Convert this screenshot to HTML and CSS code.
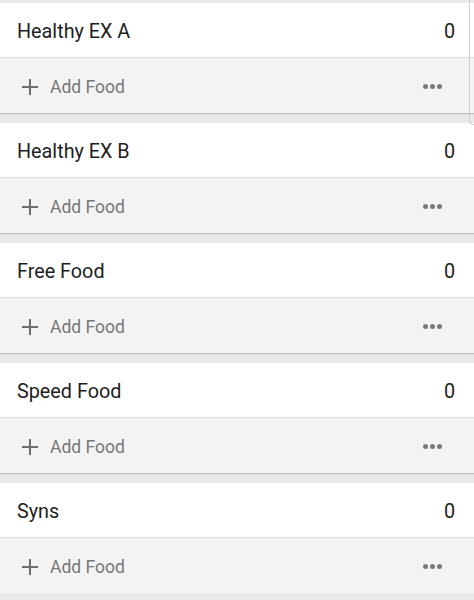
FILE: index.html
```html
<!DOCTYPE html>
<html>
<head>
<meta charset="utf-8">
<link rel="stylesheet" href="styles.css">
</head>
<body>
<div class="list">
  <section class="card">
    <div class="head"><span class="title">Healthy EX A</span><span class="count">0</span></div>
    <div class="foot">
      <span class="add"><svg class="plus" viewBox="0 0 16 16" width="16" height="16"><path d="M8 0v16M0 8h16" stroke="#6e6e6e" stroke-width="2"/></svg>Add Food</span>
      <span class="dots"><i></i><i></i><i></i></span>
    </div>
  </section>
  <section class="card">
    <div class="head"><span class="title">Healthy EX B</span><span class="count">0</span></div>
    <div class="foot">
      <span class="add"><svg class="plus" viewBox="0 0 16 16" width="16" height="16"><path d="M8 0v16M0 8h16" stroke="#6e6e6e" stroke-width="2"/></svg>Add Food</span>
      <span class="dots"><i></i><i></i><i></i></span>
    </div>
  </section>
  <section class="card">
    <div class="head"><span class="title">Free Food</span><span class="count">0</span></div>
    <div class="foot">
      <span class="add"><svg class="plus" viewBox="0 0 16 16" width="16" height="16"><path d="M8 0v16M0 8h16" stroke="#6e6e6e" stroke-width="2"/></svg>Add Food</span>
      <span class="dots"><i></i><i></i><i></i></span>
    </div>
  </section>
  <section class="card">
    <div class="head"><span class="title">Speed Food</span><span class="count">0</span></div>
    <div class="foot">
      <span class="add"><svg class="plus" viewBox="0 0 16 16" width="16" height="16"><path d="M8 0v16M0 8h16" stroke="#6e6e6e" stroke-width="2"/></svg>Add Food</span>
      <span class="dots"><i></i><i></i><i></i></span>
    </div>
  </section>
  <section class="card">
    <div class="head"><span class="title">Syns</span><span class="count">0</span></div>
    <div class="foot">
      <span class="add"><svg class="plus" viewBox="0 0 16 16" width="16" height="16"><path d="M8 0v16M0 8h16" stroke="#6e6e6e" stroke-width="2"/></svg>Add Food</span>
      <span class="dots"><i></i><i></i><i></i></span>
    </div>
  </section>
  <div class="scrolledge"></div>
</div>
</body>
</html>
```
FILE: styles.css
```css
html, body {
  margin: 0;
  padding: 0;
  background: #e9e9e9;
}
body {
  font-family: Roboto, "Noto Sans", sans-serif;
}
.list {
  position: relative;
  padding-top: 3px;
  display: flex;
  flex-direction: column;
  gap: 10px;
}
.card {
  display: flex;
  flex-direction: column;
  box-shadow: 0 1px 1px rgba(0,0,0,0.18);
}
.head {
  background: #fff;
  border-bottom: 1px solid #dcdcdc;
  display: flex;
  align-items: center;
  justify-content: space-between;
  padding: 3px 19px 0 17px;
  box-sizing: border-box;
  height: 55px;
}
.title {
  font-size: 19.8px;
  color: #1e1e1e;
}
.count {
  font-size: 19.8px;
  color: #1e1e1e;
}
.foot {
  height: 55px;
  background: #f3f3f3;
  display: flex;
  align-items: center;
  justify-content: space-between;
  padding: 2px 32px 0 22px;
  box-sizing: border-box;
}
.add {
  display: flex;
  align-items: center;
  gap: 12px;
  font-size: 17.5px;
  color: #777;
}
.plus {
  display: block;
}
.dots {
  display: flex;
  gap: 2px;
}
.dots i {
  display: block;
  width: 5px;
  height: 5px;
  border-radius: 50%;
  background: #7a7a7a;
}
.scrolledge {
  position: absolute;
  left: 469px;
  top: 0;
  width: 6px;
  height: 124px;
  border-left: 1px solid #cfcfcf;
  border-bottom: 1px solid #cfcfcf;
  border-bottom-left-radius: 4px;
}
```
